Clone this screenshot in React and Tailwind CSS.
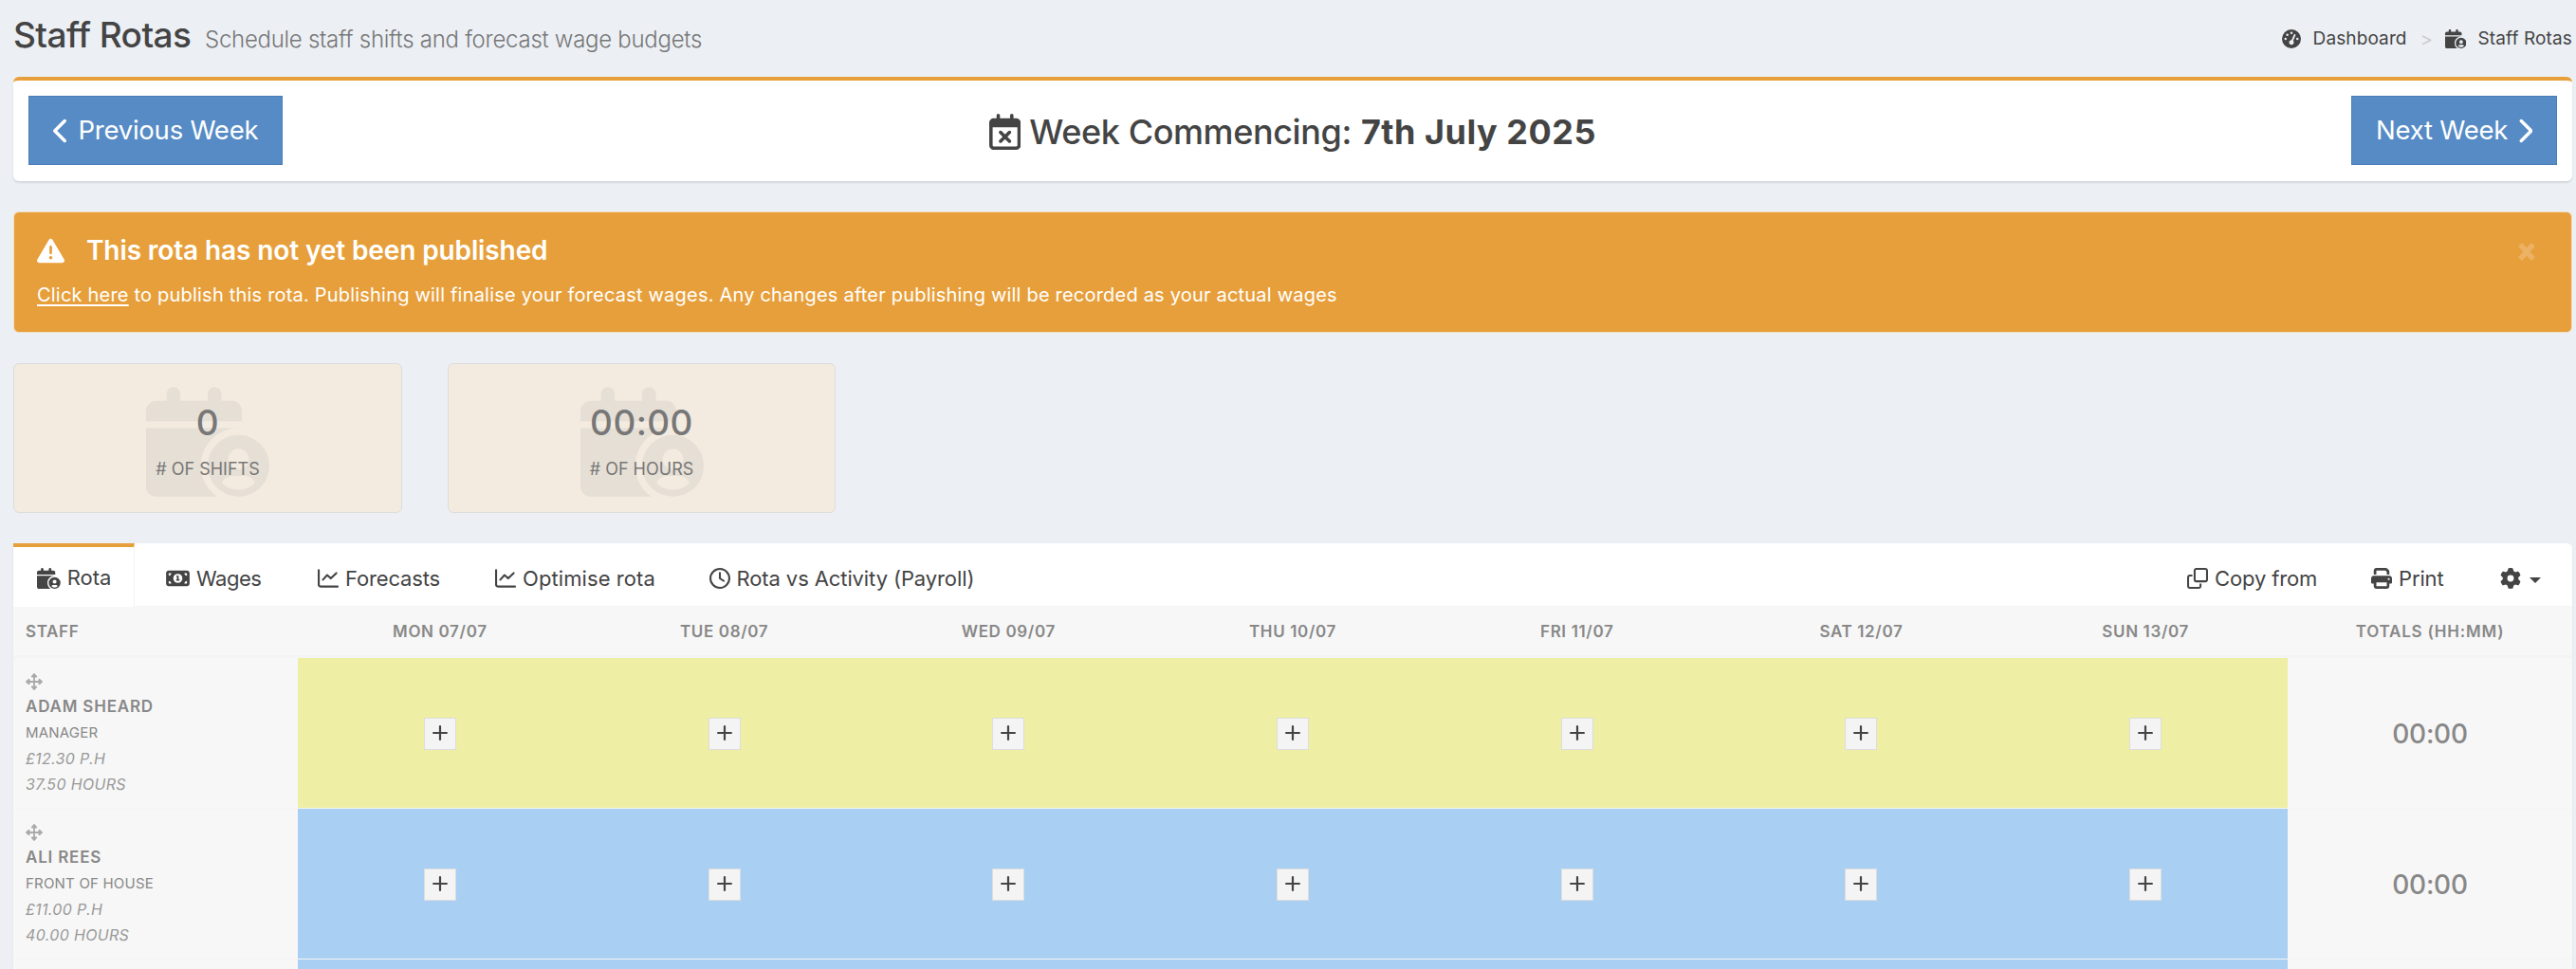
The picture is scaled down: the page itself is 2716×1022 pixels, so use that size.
import React from "react";
import {
  FaGaugeHigh,
  FaChevronLeft,
  FaChevronRight,
  FaRegCalendarXmark,
  FaTriangleExclamation,
  FaMoneyBill1,
  FaRegClock,
  FaRegClone,
  FaPrint,
  FaGear,
} from "react-icons/fa6";

function CalendarUser({ className }) {
  return (
    <svg viewBox="0 0 576 512" fill="currentColor" className={className}>
      <path d="M96 32V64H48C21.5 64 0 85.500 0 112v48H448V112c0-26.500-21.500-48-48-48H352V32c0-17.700-14.300-32-32-32s-32 14.300-32 32V64H160V32c0-17.700-14.300-32-32-32S96 14.300 96 32z" />
      <path d="M432 192H0V464c0 26.500 21.500 48 48 48H330.800C285.600 480.100 256 427.500 256 368c0-97.200 78.800-176 176-176z" />
      <path
        fillRule="evenodd"
        d="M288 368a144 144 0 1 1 288 0 144 144 0 1 1-288 0zm192-32a48 48 0 1 0-96 0 48 48 0 1 0 96 0zM355.300 448.800C374.900 468.100 402 480 432 480s57.100-11.900 76.700-31.200C502.100 429.700 484 416 462.600 416H401.400c-21.400 0-39.500 13.700-46.100 32.800z"
      />
    </svg>
  );
}

function ChartLine({ className }) {
  return (
    <svg
      viewBox="0 0 512 512"
      fill="none"
      stroke="currentColor"
      strokeWidth="50"
      strokeLinecap="round"
      strokeLinejoin="round"
      className={className}
    >
      <path d="M24 56V408c0 26.500 21.500 48 48 48H488" />
      <path d="M128 288l104-112 88 80L456 128" />
    </svg>
  );
}

function MoveIcon() {
  return (
    <svg viewBox="0 0 18 18" fill="currentColor" stroke="currentColor" strokeWidth="1.800" strokeLinejoin="round" className="size-[18px]">
      <path d="M9 3V15M3 9H15" fill="none" strokeWidth="1.800" />
      <path d="M9 1L11.200 3.600H6.800ZM9 17L11.200 14.400H6.800ZM1 9L3.600 6.800V11.200ZM17 9L14.400 6.800V11.200Z" />
    </svg>
  );
}

function Plus() {
  return (
    <svg viewBox="0 0 16 16" fill="none" stroke="currentColor" strokeWidth="2.200" strokeLinecap="round" className="mb-0.5 size-4">
      <path d="M8 1.100V14.900M1.100 8H14.900" />
    </svg>
  );
}

function Stat({ value, label, width }) {
  return (
    <div className={`relative h-[158px] rounded-md border border-[#dcdcda] bg-[#f3ebe0] pt-[38px] text-center text-[#777] ${width}`}>
      <CalendarUser className="absolute top-6 left-[139px] h-[116px] w-[130px] text-[#e6dfd5]" />
      <div className="relative text-[37px] leading-[48px] font-medium tracking-[0.4px]">{value}</div>
      <div className="relative mt-[13px] text-[18px] leading-6">{label}</div>
    </div>
  );
}

function Tab({ icon, label, className }) {
  return (
    <div className={`flex items-center gap-[7px] whitespace-nowrap ${className}`}>
      {icon}
      <span>{label}</span>
    </div>
  );
}

const days = ["MON 07/07", "TUE 08/07", "WED 09/07", "THU 10/07", "FRI 11/07", "SAT 12/07", "SUN 13/07"];

const staff = [
  { name: "ADAM SHEARD", role: "MANAGER", rate: "£12.30 P.H", hours: "37.50 HOURS", total: "00:00", color: "bg-[#eeeea5]" },
  { name: "ALI REES", role: "FRONT OF HOUSE", rate: "£11.00 P.H", hours: "40.00 HOURS", total: "00:00", color: "bg-[#a9cff3]" },
];

const columns = "grid grid-cols-[300px_repeat(7,1fr)_300px]";

export default function App() {
  return (
    <div className="h-[1022px] w-[2716px] overflow-hidden bg-[#ecf0f5] pr-1 pl-3.5 font-[Inter,sans-serif] text-[#444]">
      <header className="flex h-[81px] justify-between">
        <div className="flex items-baseline">
          <h1 className="w-[202px] text-[37px] leading-[73px] font-medium tracking-[-0.57px] whitespace-nowrap">Staff Rotas</h1>
          <p className="text-[24px] leading-8 font-light tracking-[-0.277px] text-[#777]">
            Schedule staff shifts and forecast wage budgets
          </p>
        </div>
        <nav className="flex h-[81px] items-center text-[19px] tracking-[0.120px]">
          <FaGaugeHigh className="mr-[13px] size-5" />
          <span className="pt-px">Dashboard</span>
          <span className="ml-3.5 pt-px text-[20px] text-[#ccc]">&gt;</span>
          <CalendarUser className="mr-3 ml-[13px] h-5 w-[22.500px]" />
          <span className="pt-px">Staff Rotas</span>
        </nav>
      </header>

      <section className="grid h-[110px] grid-cols-[1fr_auto_1fr] rounded-md border-t-4 border-[#e79f3b] bg-white px-4 pt-4 shadow-[0_2px_2px_rgba(0,0,0,0.1)]">
        <button className="flex h-[73px] w-[268px] items-center gap-[9px] border border-[#4a7db8] bg-[#568bc5] pl-[25px] text-[27.500px] tracking-[-0.24px] whitespace-nowrap text-white">
          <FaChevronLeft className="h-7 w-[17.500px]" />
          Previous Week
        </button>
        <h2 className="flex h-[75px] items-center text-[36px] font-medium tracking-[-0.4px] whitespace-nowrap">
          <FaRegCalendarXmark className="mr-[9px] h-[38px] w-[33.300px]" />
          Week Commencing:
          <b className="ml-[10px] font-bold tracking-[0.496px]">7th July 2025</b>
        </h2>
        <button className="flex h-[73px] w-[217px] items-center justify-between justify-self-end border border-[#4a7db8] bg-[#568bc5] pr-[25px] pl-[25px] text-[27.500px] tracking-[-0.24px] whitespace-nowrap text-white">
          Next Week
          <FaChevronRight className="h-7 w-[17.500px]" />
        </button>
      </section>

      <section className="mt-8 flex h-32 justify-between rounded-md border border-[#f3dfbd] bg-[#e79f3b] pr-[38px] pl-6 text-white">
        <div>
          <h3 className="mt-[22px] flex items-center text-[28px] leading-9 font-semibold tracking-[-0.11px]">
            <FaTriangleExclamation className="mr-[23px] size-[29px]" />
            This rota has not yet been published
          </h3>
          <p className="mt-[14px] text-[20px] leading-[30px] tracking-[0.202px]">
            <a className="underline decoration-2 underline-offset-[3px]">Click here</a> to publish this rota. Publishing will
            finalise your forecast wages. Any changes after publishing will be recorded as your actual wages
          </p>
        </div>
        <svg viewBox="0 0 18 19" stroke="#ecb265" strokeWidth="5.500" strokeLinecap="square" className="mt-8 h-[19px] w-[18px]">
          <path d="M4 4L14 15M14 4L4 15" />
        </svg>
      </section>

      <section className="mt-8 flex gap-12">
        <Stat value="0" label="# OF SHIFTS" width="w-[410px]" />
        <Stat value="00:00" label="# OF HOURS" width="w-[409px]" />
      </section>

      <section className="mt-8 rounded-tr-md bg-[#f7f7f7] shadow-[0_2px_2px_rgba(0,0,0,0.1)]">
        <div className="flex h-[67px] rounded-tr-md bg-white text-[22px]">
          <Tab
            className="w-32 border-t-4 border-r border-t-[#e79f3b] border-r-[#f4f4f4] pt-[3px] pb-px pl-[25px]"
            icon={<CalendarUser className="h-[22px] w-[24.750px]" />}
            label="Rota"
          />
          <div className="flex flex-1 border-b border-[#f4f4f4]">
            <Tab
              className="w-40 pt-2 pl-[33px] tracking-[-0.500px]"
              icon={<FaMoneyBill1 className="h-[22px] w-[25px]" />}
              label="Wages"
            />
            <Tab className="w-[187px] pt-2 pl-[33px] tracking-[-0.160px]" icon={<ChartLine className="size-[22px]" />} label="Forecasts" />
            <Tab className="w-[225.500px] pt-2 pl-[33px] tracking-[0.087px]" icon={<ChartLine className="size-[22px]" />} label="Optimise rota" />
            <Tab
              className="pt-2 pl-[33px] tracking-[-0.1px]"
              icon={<FaRegClock className="size-[22px]" />}
              label="Rota vs Activity (Payroll)"
            />
            <Tab className="ml-auto w-[194px] pt-2 tracking-[-0.138px]" icon={<FaRegClone className="size-[22px]" />} label="Copy from" />
            <Tab className="w-[136px] pt-2 tracking-[-0.150px]" icon={<FaPrint className="size-[22px]" />} label="Print" />
            <div className="flex w-[76px] items-center pt-2">
              <FaGear className="mr-[9px] size-[22px]" />
              <span className="mt-1 border-x-[6px] border-t-[6px] border-x-transparent border-t-[#444]" />
            </div>
          </div>
        </div>

        <div className={`${columns} h-[54px] items-center border-b-3 border-[#f4f4f4] pt-[3px] text-center text-[17px] font-semibold tracking-[0.650px] text-[#888]`}>
          <div className="pl-[13px] text-left">STAFF</div>
          {days.map((d) => (
            <div key={d}>{d}</div>
          ))}
          <div className="tracking-[0.800px]">TOTALS (HH:MM)</div>
        </div>

        {staff.map((s) => (
          <div key={s.name} className={`${columns} h-[159px] border-b border-[#f4f4f4]`}>
            <div className="pt-[11px] pl-[13px] text-[#888]">
              <div className="flex h-[27px] items-center pt-px text-[#aaa]">
                <MoveIcon />
              </div>
              <div className="text-[17px] leading-[27px] font-semibold tracking-[0.800px]">{s.name}</div>
              <div className="text-[15px] leading-7 tracking-[0.200px]">{s.role}</div>
              <div className="text-[16px] leading-[27px] tracking-[0.340px] text-[#999] italic">{s.rate}</div>
              <div className="text-[16px] leading-[27px] tracking-[0.340px] text-[#999] italic">{s.hours}</div>
            </div>
            {days.map((d) => (
              <div key={d} className={`flex items-center justify-center pt-0.5 ${s.color}`}>
                <button className="flex size-[34px] items-center justify-center border border-[#ddd] bg-[#f4f4f4]">
                  <Plus />
                </button>
              </div>
            ))}
            <div className="flex items-center justify-center pt-px text-[28px] font-medium tracking-[-0.28px] text-[#888]">{s.total}</div>
          </div>
        ))}
        <div className={`${columns} h-[159px]`}>
          <div className="col-span-7 col-start-2 bg-[#a9cff3]" />
        </div>
      </section>
    </div>
  );
}
